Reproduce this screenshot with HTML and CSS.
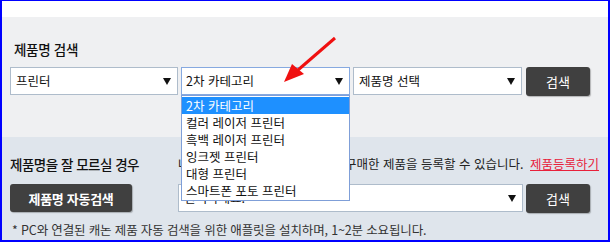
FILE: index.html
```html
<!DOCTYPE html>
<html lang="ko">
<head>
    <meta charset="utf-8">
    <link rel="stylesheet" href="styles.css">
</head>
<body>
<div class="frame">
    <div class="topbar"></div>

    <section class="search">
        <h2 class="title">제품명 검색</h2>
        <div class="row">
            <div class="select sel-first">
                <span>프린터</span>
                <svg class="caret" width="8" height="7" viewBox="0 0 8 7"><path d="M0 0H8L4 7Z"/></svg>
            </div>
            <div class="select sel-mid is-open">
                <span>2차 카테고리</span>
                <svg class="caret" width="8" height="7" viewBox="0 0 8 7"><path d="M0 0H8L4 7Z"/></svg>
                <ul class="options">
                    <li class="active">2차 카테고리</li>
                    <li>컬러 레이저 프린터</li>
                    <li>흑백 레이저 프린터</li>
                    <li>잉크젯 프린터</li>
                    <li>대형 프린터</li>
                    <li>스마트폰 포토 프린터</li>
                </ul>
            </div>
            <div class="select sel-last">
                <span>제품명 선택</span>
                <svg class="caret" width="8" height="7" viewBox="0 0 8 7"><path d="M0 0H8L4 7Z"/></svg>
            </div>
            <button class="btn btn-search">검색</button>
        </div>

        <!-- annotation arrow -->
        <svg class="pointer" width="60" height="50" viewBox="0 0 60 50">
            <line x1="55" y1="2" x2="18" y2="34" stroke="#f01010" stroke-width="3"/>
            <path d="M4 46 L12 28 L24 38 Z" fill="#f01010"/>
        </svg>
    </section>

    <section class="auto">
        <div class="grid">
            <h3 class="subtitle">제품명을 잘 모르실 경우</h3>
            <p class="info">나의 캐논 제품 관리 페이지에서 구매한 제품을 등록할 수 있습니다. <a href="#" class="reg-link">제품등록하기</a></p>

            <button class="btn btn-auto">제품명 자동검색</button>
            <div class="row-right">
                <div class="select sel-wide">
                    <span>선택하세요.</span>
                    <svg class="caret" width="8" height="7" viewBox="0 0 8 7"><path d="M0 0H8L4 7Z"/></svg>
                </div>
                <button class="btn btn-search">검색</button>
            </div>
        </div>
        <p class="note">* PC와 연결된 캐논 제품 자동 검색을 위한 애플릿을 설치하며, 1~2분 소요됩니다.</p>
    </section>
</div>
</body>
</html>
```

FILE: styles.css
```css
body {
    margin: 0;
    padding: 0;
    background-color: #ffffff;
    font-family: "Noto Sans CJK KR", "Noto Sans", sans-serif;
    font-size: 12.5px;
    color: #222;
}

.frame {
    width: 610px;
    height: 242px;
    box-sizing: border-box;
    border: 2px solid #0000ff;
    border-top-width: 1px;
    overflow: hidden;
}

.topbar {
    height: 16px;
    background-color: #ffffff;
}

/* first panel */

.search {
    position: relative;
    height: 120px;
    box-sizing: border-box;
    background-color: #eff0f2;
    padding: 22px 0 0 8px;
}

.title {
    margin: 0 0 0 4px;
    font-size: 13.5px;
    font-weight: 500;
    letter-spacing: -0.3px;
    line-height: 20px;
    color: #111;
}

.row {
    display: flex;
    align-items: flex-start;
    margin-top: 8px;
}

.select {
    position: relative;
    display: flex;
    align-items: center;
    justify-content: space-between;
    height: 28px;
    box-sizing: border-box;
    background-color: #fff;
    border: 1px solid #aebccb;
    padding: 0 6px 0 5px;
    line-height: 26px;
    color: #111;
}

.caret {
    fill: #111;
}

.sel-first {
    width: 168px;
    margin-right: 3px;
}

.sel-mid {
    width: 169px;
    margin-right: 3px;
    padding-left: 4px;
    border-color: #86a9e0;
}

.sel-last {
    width: 169px;
    margin-right: 4px;
}

.options {
    position: absolute;
    top: 27px;
    left: -1px;
    width: 169px;
    box-sizing: border-box;
    margin: 0;
    padding: 1px 0;
    list-style: none;
    background-color: #fff;
    border: 1px solid #7f9fd8;
    z-index: 5;
}

.options li {
    height: 17px;
    line-height: 17px;
    padding-left: 4px;
    color: #111;
}

.options li.active {
    background-color: #1e90ff;
    color: #fff;
}

.btn {
    height: 29px;
    border: none;
    border-radius: 3px;
    background-color: #404040;
    box-shadow: 1px 1px 1px rgba(0, 0, 0, 0.25);
    color: #fff;
    font-family: inherit;
    font-size: 13px;
    padding: 0;
    cursor: pointer;
}

.btn-search {
    width: 64px;
}

.pointer {
    position: absolute;
    left: 278px;
    top: 19px;
}

/* second panel */

.auto {
    background-color: #dfe5ec;
    height: 104px;
    padding: 17px 0 0 8px;
    box-sizing: border-box;
}

.grid {
    display: grid;
    grid-template-columns: 168px 1fr;
    row-gap: 10px;
}

.subtitle {
    margin: 0;
    font-size: 13.5px;
    font-weight: 500;
    letter-spacing: -0.5px;
    line-height: 20px;
    color: #111;
}

.info {
    margin: 0;
    line-height: 20px;
    color: #222;
    white-space: nowrap;
}

.reg-link {
    margin-left: 3px;
    color: #e8203a;
}

.btn-auto {
    width: 122px;
    height: 28px;
    font-weight: bold;
    letter-spacing: -0.3px;
}

.row-right {
    display: flex;
    align-items: flex-start;
}

.sel-wide {
    width: 345px;
    margin-right: 3px;
}

.note {
    margin: 8px 0 0 2px;
    line-height: 18px;
    letter-spacing: -0.15px;
    color: #333;
}
```
